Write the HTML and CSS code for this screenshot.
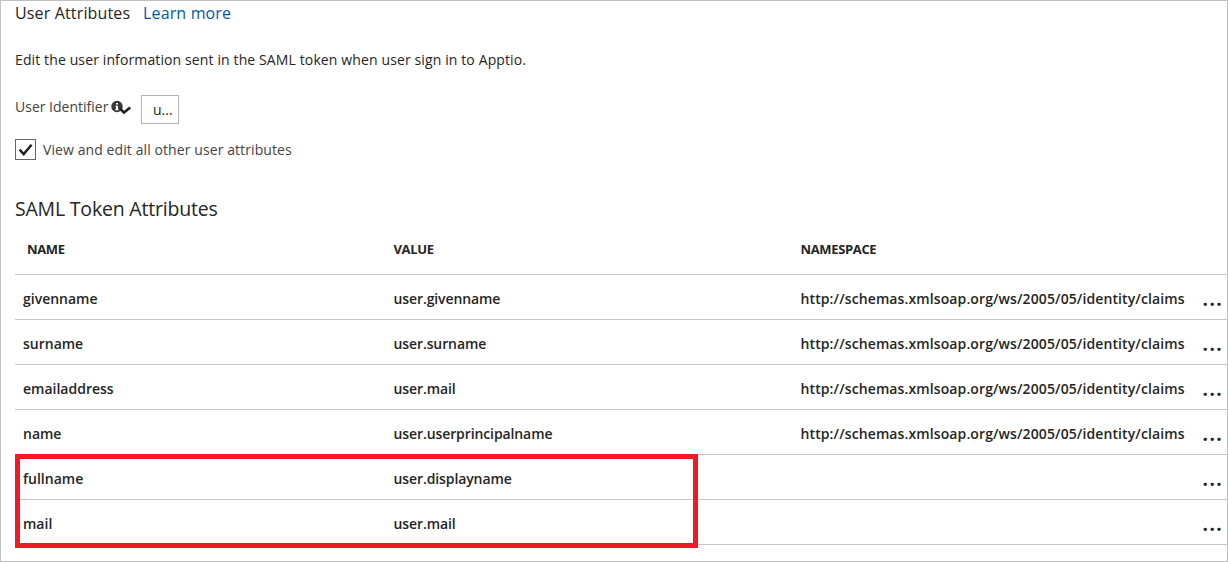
FILE: index.html
```html
<!DOCTYPE html>
<html lang="en">
<head>
<meta charset="utf-8">
<title>User Attributes</title>
<link rel="stylesheet" href="styles.css">
</head>
<body>
<main class="panel">
  <header class="heading"><span class="heading-title">User Attributes</span><a class="learn">Learn more</a></header>
  <p class="intro"><span>Edit the user information sent in the SAML token when user sign in to Apptio.</span></p>
  <div class="identifier">
    <label class="identifier-label">User Identifier</label>
    <svg class="info" width="21" height="16" viewBox="0 0 21 16"><circle cx="6" cy="6.5" r="5.7" fill="#3a3a3a"/><path d="M5 3h2v1.6H5zM4.4 5.7H7v3.6h.8v1H4.2v-1H5V6.7h-.6z" fill="#fff"/><path d="M8.6 8.2L13 12.4l6.2-5" fill="none" stroke="#222" stroke-width="2.6"/></svg>
    <div class="select"><span>u...</span></div>
  </div>
  <div class="option">
    <span class="checkbox"><svg width="19" height="19" viewBox="0 0 19 19"><path d="M3.6 9.6L7.7 14l7.9-9.3" fill="none" stroke="#222" stroke-width="2.5"/></svg></span>
    <span class="option-label">View and edit all other user attributes</span>
  </div>
  <h2 class="subtitle"><span>SAML Token Attributes</span></h2>
  <section class="table">
    <div class="row head"><span class="name">NAME</span><span>VALUE</span><span class="ns">NAMESPACE</span></div>
    <div class="row"><span class="name">givenname</span><span class="value">user.givenname</span><span class="url">http://schemas.xmlsoap.org/ws/2005/05/identity/claims</span><span class="more">...</span></div>
    <div class="row"><span class="name">surname</span><span class="value">user.surname</span><span class="url">http://schemas.xmlsoap.org/ws/2005/05/identity/claims</span><span class="more">...</span></div>
    <div class="row"><span class="name">emailaddress</span><span class="value">user.mail</span><span class="url">http://schemas.xmlsoap.org/ws/2005/05/identity/claims</span><span class="more">...</span></div>
    <div class="row"><span class="name">name</span><span class="value">user.userprincipalname</span><span class="url">http://schemas.xmlsoap.org/ws/2005/05/identity/claims</span><span class="more">...</span></div>
    <div class="row"><span class="name">fullname</span><span class="value">user.displayname</span><span></span><span class="more">...</span></div>
    <div class="row"><span class="name">mail</span><span class="value">user.mail</span><span></span><span class="more">...</span></div>
    <div class="highlight"></div>
  </section>
</main>
</body>
</html>
```
FILE: styles.css
```css
* { box-sizing: border-box; }
body { margin: 0; background: #fff; color: #252525; font-family: "Open Sans", "Noto Sans", sans-serif; font-size: 14px; }
.panel { width: 1228px; height: 562px; border: 1px solid #c0c0c0; padding-left: 14px; overflow: hidden; white-space: nowrap; }
.heading { display: flex; height: 24px; line-height: 24px; font-size: 16px; letter-spacing: 0.15px; }
.heading-title { width: 128px; }
.learn { color: #0058ad; }
.intro { margin: 23px 0 0; height: 24px; line-height: 24px; letter-spacing: 0.12px; }
.identifier { display: flex; height: 29px; margin-top: 23px; }
.identifier-label { width: 96px; line-height: 24px; color: #444; }
.info { margin-top: 5px; }
.select { width: 38px; height: 29px; margin-left: 9px; border: 1px solid #b4b4b4; padding-left: 11px; line-height: 28px; }
.option { display: flex; height: 21px; margin-top: 15px; line-height: 21px; color: #444; letter-spacing: 0.09px; }
.checkbox { width: 21px; height: 21px; border: 1px solid #666; }
.checkbox svg { display: block; }
.option-label { margin-left: 7px; }
.subtitle { margin: 35px 0 0; height: 27px; line-height: 27px; font-size: 19.5px; font-weight: 400; letter-spacing: -0.2px; }
.table { position: relative; margin-top: 2px; }
.row { display: grid; grid-template-columns: 378.5px 407px 402px 1fr; height: 45px; border-bottom: 1px solid #c8c8c8; line-height: 44px; padding-top: 2px; font-weight: 600; }
.name { padding-left: 8px; }
.value { letter-spacing: -0.1px; }
.url { letter-spacing: 0.11px; }
.head { height: 51px; line-height: 44px; font-size: 13px; font-weight: 700; padding-top: 3px; letter-spacing: -0.35px; }
.head .name { padding-left: 12px; }
.more { font-size: 19px; font-weight: 700; letter-spacing: 1.5px; }
.highlight { position: absolute; left: 0; top: 230px; width: 683px; height: 94px; border: 5px solid #ed1c24; }
```
